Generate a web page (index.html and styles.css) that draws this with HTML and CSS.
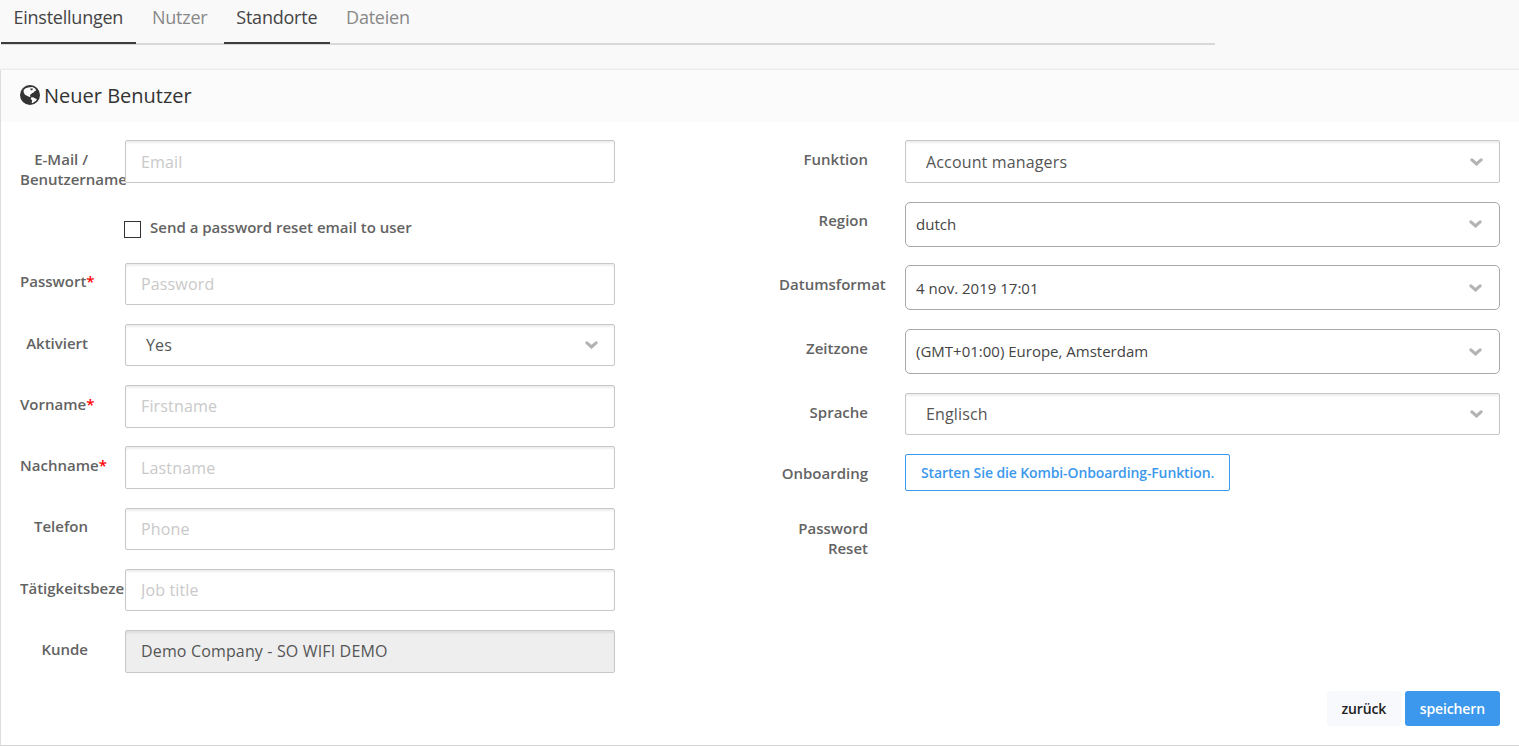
FILE: index.html
```
<!DOCTYPE html>
<html lang="de">
<head>
  <meta charset="UTF-8">
  <meta name="viewport" content="width=device-width, initial-scale=1">
  <title>Neuer Benutzer</title>
  <link rel="stylesheet" href="styles.css">
</head>
<body>
  <svg width="0" height="0" class="sprite">
    <symbol id="chevron" viewBox="0 0 13 8">
      <path d="M1.9 1.9 L6.5 6 L11.1 1.9" fill="none" stroke="#b3b3b3" stroke-width="3.1" stroke-linecap="round"/>
    </symbol>
  </svg>

  <nav class="tabs">
    <a href="#" class="tab active">Einstellungen</a>
    <a href="#" class="tab">Nutzer</a>
    <a href="#" class="tab active">Standorte</a>
    <a href="#" class="tab">Dateien</a>
  </nav>

  <div class="card">
    <div class="card-header">
      <svg class="globe" viewBox="0 0 20 20">
        <circle cx="10" cy="10" r="10" fill="#333"/>
        <path d="M3.6 5 L6 3 L9.5 2.2 L12.5 2 L15.2 3.4 L16.2 5.4 L14.6 6.2 L13.6 7.6 L12 8.2 L10.8 9.6 L9.8 9.8 L10.6 11.4 L9.6 12 L7.4 11 L5 9.8 L3.8 7.8 Z" fill="#fbfbfb"/>
        <path d="M10.2 3.6 L12.8 3.4 L12.4 5.2 L10.9 5.2 Z" fill="#333"/>
        <path d="M11 12.6 L13.2 12.2 L15.2 13.4 L17 14 L16 15.8 L14.2 17 L12.4 18.2 L11.6 17.4 L12.2 15.6 L10.8 14 Z" fill="#fbfbfb"/>
      </svg>
      <h1>Neuer Benutzer</h1>
    </div>

    <form id="userForm">
      <div class="columns">
        <!-- Account data -->
        <div class="column column-left">
          <div class="form-group">
            <label for="email">E-Mail / Benutzername</label>
            <input class="control" type="text" id="email" placeholder="Email">
          </div>
          <div class="form-group checkbox-group">
            <input type="checkbox" id="sendReset">
            <label for="sendReset">Send a password reset email to user</label>
          </div>
          <div class="form-group">
            <label for="password">Passwort<span class="required">*</span></label>
            <input class="control" type="password" id="password" placeholder="Password">
          </div>
          <div class="form-group">
            <label for="enabled">Aktiviert</label>
            <div class="select">
              <select class="control" id="enabled"><option>Yes</option><option>No</option></select>
              <svg class="arrow"><use href="#chevron"/></svg>
            </div>
          </div>
          <div class="form-group">
            <label for="firstname">Vorname<span class="required">*</span></label>
            <input class="control" type="text" id="firstname" placeholder="Firstname">
          </div>
          <div class="form-group">
            <label for="lastname">Nachname<span class="required">*</span></label>
            <input class="control" type="text" id="lastname" placeholder="Lastname">
          </div>
          <div class="form-group">
            <label for="phone">Telefon</label>
            <input class="control" type="text" id="phone" placeholder="Phone">
          </div>
          <div class="form-group">
            <label for="jobtitle">Tätigkeitsbeze</label>
            <input class="control" type="text" id="jobtitle" placeholder="Job title">
          </div>
          <div class="form-group">
            <label for="customer">Kunde</label>
            <input class="control" type="text" id="customer" value="Demo Company - SO WIFI DEMO" disabled>
          </div>
        </div>

        <!-- Role and locale -->
        <div class="column column-right">
          <div class="form-group">
            <label for="role">Funktion</label>
            <div class="select">
              <select class="control" id="role"><option>Account managers</option></select>
              <svg class="arrow"><use href="#chevron"/></svg>
            </div>
          </div>
          <div class="form-group tall">
            <label for="region">Region</label>
            <div class="select chosen">
              <select class="control" id="region"><option>dutch</option></select>
              <svg class="arrow"><use href="#chevron"/></svg>
            </div>
          </div>
          <div class="form-group tall">
            <label for="dateformat">Datumsformat</label>
            <div class="select chosen">
              <select class="control" id="dateformat"><option>4 nov. 2019 17:01</option></select>
              <svg class="arrow"><use href="#chevron"/></svg>
            </div>
          </div>
          <div class="form-group tall">
            <label for="timezone">Zeitzone</label>
            <div class="select chosen">
              <select class="control" id="timezone"><option>(GMT+01:00) Europe, Amsterdam</option></select>
              <svg class="arrow"><use href="#chevron"/></svg>
            </div>
          </div>
          <div class="form-group">
            <label for="language">Sprache</label>
            <div class="select">
              <select class="control" id="language"><option>Englisch</option></select>
              <svg class="arrow"><use href="#chevron"/></svg>
            </div>
          </div>
          <div class="form-group onboarding">
            <label>Onboarding</label>
            <button type="button" class="btn btn-outline">Starten Sie die Kombi-Onboarding-Funktion.</button>
          </div>
          <div class="form-group">
            <label>Password Reset</label>
          </div>
        </div>
      </div>

      <div class="actions">
        <button type="button" class="btn btn-back">zurück</button>
        <button type="submit" class="btn btn-save">speichern</button>
      </div>
    </form>
  </div>
</body>
</html>
```
FILE: styles.css
```
* {
  box-sizing: border-box;
}
body {
  margin: 0;
  height: 746px;
  overflow: hidden;
  background: #f9f9f9;
  color: #333;
  font-family: "Open Sans", sans-serif;
  font-size: 15px;
}
.sprite {
  display: block;
}

/* Tabs */
.tabs {
  display: flex;
  gap: 4px;
  width: 1214px;
  height: 45px;
  margin-left: 1px;
  border-bottom: 2px solid #d8d8d8;
}
.tab {
  height: 44px;
  padding: 5px 12.4px 0;
  font-size: 18px;
  letter-spacing: -0.23px;
  line-height: 25px;
  color: #888;
  text-decoration: none;
}
.tab.active {
  color: #444;
  border-bottom: 2px solid #3c3c3c;
}

/* Card */
.card {
  height: 676px;
  margin-top: 25px;
  background: #fff;
  border-left: 1px solid #ddd;
  border-bottom: 1px solid #d3d3d3;
  box-shadow: 0 -1px 2px rgba(0,0,0,0.08);
}
.card-header {
  display: flex;
  height: 52px;
  padding-left: 19px;
  background: #fbfbfb;
}
.globe {
  width: 20px;
  height: 20px;
  margin: 15px 4px 0 0;
}
h1 {
  margin: 0;
  font-size: 20px;
  font-weight: 400;
  line-height: 52px;
}

/* Form */
.columns {
  display: flex;
  justify-content: space-between;
  height: 569px;
  padding: 18.36px 19px 0;
}
.column-left {
  width: 595px;
}
.column-right {
  width: 721px;
}
.form-group {
  display: flex;
  align-items: flex-start;
  height: 61.22px;
}
.form-group.tall {
  height: 63.8px;
}
.form-group label {
  flex: none;
  width: 68px;
  margin: 8.65px 37px 0 0;
  font-weight: 600;
  line-height: 20px;
  color: #636363;
  text-align: right;
}
.column-right .form-group label {
  width: 89px;
}
.required {
  color: #f00;
}
.control {
  position: relative;
  flex: 1;
  width: 100%;
  min-width: 0;
  height: 42.42px;
  margin: 0;
  padding: 0 15px;
  background: #fff;
  border: 1px solid #c8c8c8;
  border-radius: 2px;
  box-shadow: inset 0 2px 2px rgba(0,0,0,0.07);
  color: #555;
  font-family: inherit;
  font-size: 16px;
  letter-spacing: 0.15px;
}
.control::placeholder {
  color: #c9c9c9;
}
.control:disabled {
  background: #eee;
  color: #555;
}
select.control {
  appearance: none;
  display: block;
  padding: 0 20px;
}
.select {
  position: relative;
  flex: 1;
}
.arrow {
  position: absolute;
  top: 17.4px;
  right: 17px;
  width: 13px;
  height: 8px;
  pointer-events: none;
}
.chosen .control {
  height: 45px;
  padding: 0 10px 0.6px;
  border-color: #aaa;
  border-radius: 5px;
  box-shadow: none;
  color: #444;
  font-size: 15px;
  letter-spacing: 0;
}
.chosen .arrow {
  top: 18.4px;
  right: 18px;
}
.checkbox-group input {
  appearance: none;
  width: 17px;
  height: 17px;
  margin: 19px 9px 0 104px;
  border: 1px solid #333;
}
.form-group.checkbox-group label {
  width: auto;
  margin: 15.6px 0 0;
}

/* Buttons */
.btn {
  height: 35px;
  padding: 0 15px;
  border: 0;
  border-radius: 3px;
  font-family: inherit;
  font-size: 14px;
  font-weight: 600;
  letter-spacing: -0.12px;
}
.btn-outline {
  height: 37px;
  background: #fff;
  border: 1px solid #3c98ec;
  border-radius: 2px;
  color: #3c98ec;
}
.onboarding {
  height: 55px;
}
.actions {
  display: flex;
  justify-content: flex-end;
  gap: 4px;
  padding-right: 19px;
}
.btn-back {
  padding: 0 14.5px;
  background: #f8f9fc;
  color: #222;
}
.btn-save {
  background: #3c98ec;
  color: #fff;
}
```
